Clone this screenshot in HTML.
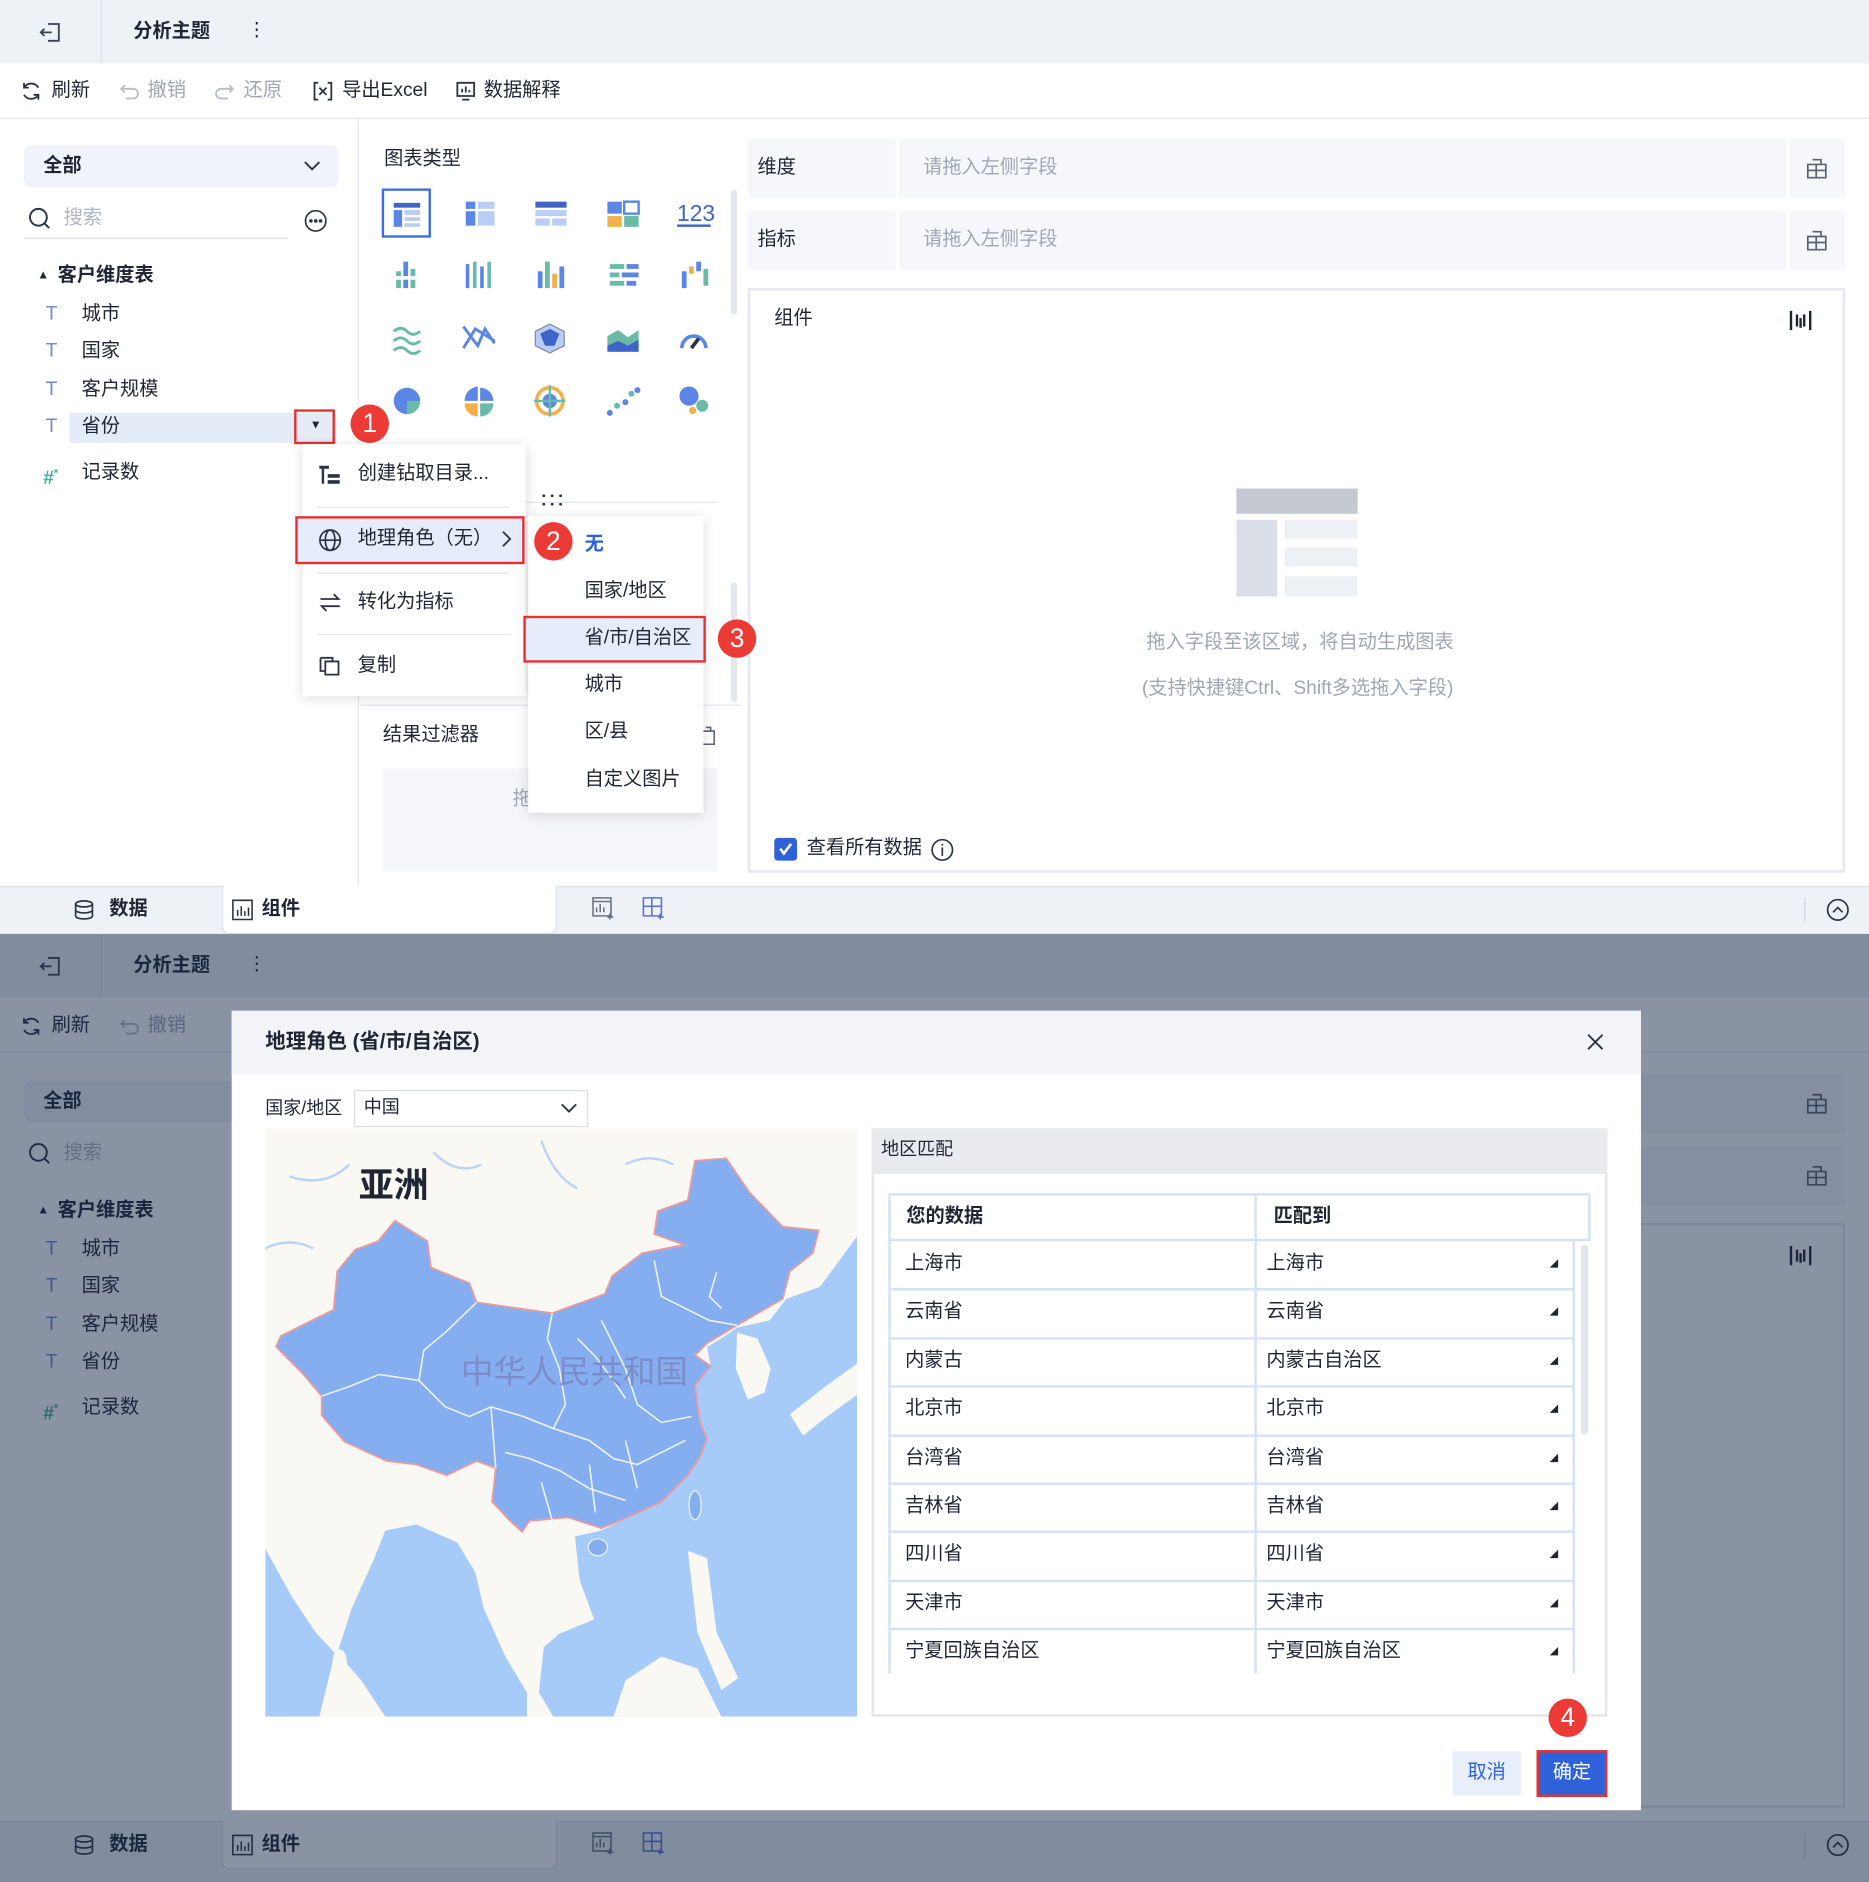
<!DOCTYPE html>
<html><head><meta charset="utf-8">
<style>
*{box-sizing:border-box;margin:0;padding:0}
html,body{width:1869px;height:1882px;overflow:hidden;background:#fff}
body{font-family:"Liberation Sans","Noto Sans CJK SC",sans-serif;color:#1f2533}
#w{position:absolute;left:0;top:0;width:1557px;height:1568px;transform:scale(1.2004);transform-origin:0 0;overflow:hidden}
.a{position:absolute}
.t{position:absolute;font-size:16px;line-height:24px;white-space:nowrap}
.b{font-weight:bold}
.g{color:#a0a6b2}
.red{position:absolute;border:2px solid #e8302f}
.num{position:absolute;width:32px;height:32px;border-radius:50%;background:#ec3b36;color:#fff;font-size:22px;line-height:32px;text-align:center}
.ov{position:absolute;left:0;top:778px;width:1557px;height:790px;background:rgba(21,39,71,.5)}
</style></head><body><div id="w">

<!-- ====== TOP HALF ====== -->
<div class="a" style="left:0;top:0;width:1557px;height:53px;background:#eef1f6"></div>
<div class="a" style="left:84px;top:0;width:1px;height:53px;background:#dde1e8"></div>
<svg class="a" style="left:32px;top:17px" width="20" height="20" viewBox="0 0 20 20" fill="none" stroke="#3a4252" stroke-width="1.5"><path d="M8 3h9v14H8M11 10H2M5 7l-3 3 3 3"/></svg>
<div class="t b" style="left:111px;top:15px">分析主题</div>
<div class="t" style="left:206px;top:14px">⋮</div>

<div class="a" style="left:0;top:53px;width:1557px;height:46px;background:#fff;border-bottom:1px solid #e3e6ec"></div>
<svg class="a" style="left:17px;top:67px" width="18" height="18" viewBox="0 0 18 18" fill="none" stroke="#2b3242" stroke-width="1.5"><path d="M15 6A7 7 0 0 0 3 6M3 12a7 7 0 0 0 12 0M3 2v4h4M15 16v-4h-4"/></svg>
<div class="t" style="left:43px;top:64px">刷新</div>
<svg class="a" style="left:99px;top:68px" width="18" height="16" viewBox="0 0 18 16" fill="none" stroke="#b7bcc6" stroke-width="1.5"><path d="M5 3L2 6l3 3M2 6h10a4 4 0 0 1 0 8H6"/></svg>
<div class="t g" style="left:123px;top:64px">撤销</div>
<svg class="a" style="left:178px;top:68px" width="18" height="16" viewBox="0 0 18 16" fill="none" stroke="#b7bcc6" stroke-width="1.5"><path d="M13 3l3 3-3 3M16 6H6a4 4 0 0 0 0 8h6"/></svg>
<div class="t g" style="left:203px;top:64px">还原</div>
<svg class="a" style="left:260px;top:67px" width="18" height="18" viewBox="0 0 18 18" fill="none" stroke="#2b3242" stroke-width="1.5"><path d="M5 2H2v14h3M13 2h3v14h-3M6 6l6 6M12 6l-6 6"/></svg>
<div class="t" style="left:285px;top:64px">导出Excel</div>
<svg class="a" style="left:379px;top:67px" width="18" height="18" viewBox="0 0 18 18" fill="none" stroke="#2b3242" stroke-width="1.5"><path d="M2 2h14v11H2zM6 16h6M6 10V7M9 10V5M12 10V8"/></svg>
<div class="t" style="left:403px;top:64px">数据解释</div>

<!-- left panel -->
<div class="a" style="left:298px;top:99px;width:1px;height:640px;background:#e3e6ec"></div>
<div class="a" style="left:20px;top:121px;width:262px;height:35px;background:#f0f3fa;border-radius:6px"></div>
<div class="t b" style="left:36px;top:127px">全部</div>
<svg class="a" style="left:252px;top:132px" width="16" height="12" viewBox="0 0 16 12" fill="none" stroke="#2b3242" stroke-width="1.6"><path d="M2 3l6 6 6-6"/></svg>
<svg class="a" style="left:23px;top:172px" width="20" height="20" viewBox="0 0 20 20" fill="none" stroke="#2b3242" stroke-width="1.6"><circle cx="9" cy="9" r="7"/><path d="M14 14l4 4"/></svg>
<div class="t" style="left:53px;top:170px;color:#b0b5bf">搜索</div>
<div class="a" style="left:20px;top:198px;width:220px;height:1px;background:#d8dce3"></div>
<svg class="a" style="left:253px;top:174px" width="20" height="20" viewBox="0 0 20 20" fill="none" stroke="#2b3242" stroke-width="1.4"><circle cx="10" cy="10" r="8.5"/><circle cx="6" cy="10" r=".8" fill="#2b3242"/><circle cx="10" cy="10" r=".8" fill="#2b3242"/><circle cx="14" cy="10" r=".8" fill="#2b3242"/></svg>
<div class="t" style="left:31px;top:218px;font-size:10px">▲</div>
<div class="t b" style="left:48px;top:218px">客户维度表</div>
<div class="t" style="left:38px;top:250px;color:#6d8bd0">T</div><div class="t" style="left:68px;top:250px">城市</div>
<div class="t" style="left:38px;top:281px;color:#6d8bd0">T</div><div class="t" style="left:68px;top:281px">国家</div>
<div class="t" style="left:38px;top:313px;color:#6d8bd0">T</div><div class="t" style="left:68px;top:313px">客户规模</div>
<div class="a" style="left:58px;top:344px;width:222px;height:25px;background:#e6ebf8"></div>
<div class="t" style="left:38px;top:344px;color:#6d8bd0">T</div><div class="t" style="left:68px;top:344px">省份</div>
<div class="red" style="left:245px;top:341px;width:34px;height:29px"></div>
<div class="t" style="left:258px;top:343px;font-size:10px">▼</div>
<div class="num" style="left:292px;top:337px">1</div>
<div class="t b" style="left:36px;top:382px;color:#3fb596">#<sup style="font-size:9px">*</sup></div>
<div class="t" style="left:68px;top:382px">记录数</div>

<!-- middle panel -->
<div class="t" style="left:320px;top:121px">图表类型</div>
<div class="a" style="left:318px;top:157px;width:41px;height:41px;border:2px solid #3d6ee8"></div>
<svg class="a" style="left:318px;top:160px" width="290" height="195" viewBox="0 0 290 195">
 <g fill="#5c86e6">
  <rect x="10" y="9" width="22" height="4" fill="#3f64c8"/><rect x="10" y="15" width="7" height="14"/><rect x="19" y="15" width="13" height="4" fill="#b9cdf6"/><rect x="19" y="21" width="13" height="3" fill="#b9cdf6"/><rect x="19" y="26" width="13" height="3" fill="#b9cdf6"/>
  <rect x="70" y="8" width="8" height="6"/><rect x="80" y="8" width="14" height="6" fill="#b9cdf6"/><rect x="70" y="16" width="8" height="12"/><rect x="80" y="16" width="14" height="12" fill="#b9cdf6"/>
  <rect x="128" y="8" width="26" height="5" fill="#3f64c8"/><rect x="128" y="15" width="26" height="5" fill="#b9cdf6"/><rect x="128" y="22" width="12" height="6" fill="#b9cdf6"/><rect x="142" y="22" width="12" height="6" fill="#b9cdf6"/>
  <rect x="188" y="8" width="12" height="10"/><rect x="202" y="8" width="12" height="10" fill="none" stroke="#5c86e6" stroke-width="2"/><rect x="188" y="20" width="12" height="9" fill="#f2b04d"/><rect x="202" y="20" width="12" height="9" fill="#69bba8"/>
 </g>
 <text x="246" y="24" font-size="19" fill="#3f64c8" font-family="Liberation Sans">123</text>
 <rect x="246" y="27" width="28" height="2" fill="#3f64c8"/>
 <g fill="#5c86e6">
  <rect x="18" y="58" width="4" height="22"/><rect x="12" y="66" width="4" height="14" fill="#69bba8"/><rect x="24" y="64" width="4" height="16" fill="#69bba8"/><rect x="10" y="70" width="22" height="3" fill="#fff"/>
  <rect x="70" y="60" width="3" height="20"/><rect x="76" y="58" width="3" height="22" fill="#69bba8"/><rect x="82" y="62" width="3" height="18"/><rect x="88" y="58" width="3" height="22" fill="#69bba8"/>
  <rect x="130" y="66" width="4" height="14"/><rect x="136" y="58" width="4" height="22" fill="#69bba8"/><rect x="142" y="68" width="4" height="12" fill="#f2b04d"/><rect x="148" y="62" width="4" height="18"/>
  <rect x="190" y="60" width="12" height="4" fill="#69bba8"/><rect x="204" y="60" width="10" height="4"/><rect x="190" y="67" width="8" height="4" fill="#69bba8"/><rect x="200" y="67" width="14" height="4"/><rect x="190" y="74" width="12" height="4" fill="#69bba8"/><rect x="204" y="74" width="8" height="4"/>
  <rect x="250" y="66" width="4" height="14"/><rect x="256" y="62" width="4" height="6" fill="#f2b04d"/><rect x="262" y="58" width="4" height="8"/><rect x="268" y="64" width="4" height="14" fill="#69bba8"/>
 </g>
 <g fill="none" stroke-width="2.4">
  <path d="M10 116q6-5 11 0t11 0M10 124q6-5 11 0t11 0M10 132q6-5 11 0t11 0" stroke="#69bba8"/>
  <path d="M68 112l12 16 6-14 8 12M68 130l10-16 16 10" stroke="#5c86e6"/>
 </g>
 <path d="M140 110l12 6v12l-12 6-12-6v-12z" fill="#b9cdf6" stroke="#7a8aa8"/><path d="M132 118l8-4 8 4-4 10h-8z" fill="#3f64c8"/>
 <path d="M188 120l9-5 8 6 9-6v18h-26z" fill="#69bba8"/><path d="M188 128l9-4 8 4 9-5v10h-26z" fill="#3f64c8"/>
 <path d="M250 130a10 10 0 1 1 20 0" fill="none" stroke="#5c86e6" stroke-width="3"/><path d="M258 130l6-8" stroke="#2b3242" stroke-width="3"/>
 <circle cx="21" cy="174" r="11" fill="#5c86e6"/><path d="M21 174h11a11 11 0 0 1-11 11z" fill="#69bba8"/>
 <path d="M80 174v-12a12 12 0 0 0-11 12z" fill="#5c86e6"/><path d="M82 176h11a11 11 0 0 1-11 11z" fill="#69bba8"/><path d="M80 176v11a11 11 0 0 1-11-11z" fill="#f2b04d"/><path d="M82 174v-11a11 11 0 0 1 11 11z" fill="#5c86e6"/>
 <circle cx="140" cy="174" r="11" fill="none" stroke="#f2b04d" stroke-width="3"/><circle cx="140" cy="174" r="6" fill="#5c86e6"/><path d="M127 174h26M140 161v26" stroke="#69bba8" stroke-width="2"/>
 <g fill="#5c86e6"><circle cx="190" cy="184" r="2.5"/><circle cx="196" cy="178" r="2.5" fill="#69bba8"/><circle cx="203" cy="175" r="2.5"/><circle cx="208" cy="168" r="2.5" fill="#69bba8"/><circle cx="213" cy="165" r="2.5"/></g>
 <circle cx="256" cy="170" r="8" fill="#5c86e6"/><circle cx="267" cy="178" r="5" fill="#69bba8"/><circle cx="259" cy="182" r="3" fill="#f2b04d"/>
</svg>
<div class="a" style="left:609px;top:158px;width:5px;height:104px;background:#e4e7ec;border-radius:3px"></div>
<svg class="a" style="left:450px;top:410px" width="20" height="12" viewBox="0 0 20 12" fill="#2b3242"><circle cx="3" cy="3" r="1.2"/><circle cx="10" cy="3" r="1.2"/><circle cx="17" cy="3" r="1.2"/><circle cx="3" cy="10" r="1.2"/><circle cx="10" cy="10" r="1.2"/><circle cx="17" cy="10" r="1.2"/></svg>
<div class="a" style="left:438px;top:418px;width:160px;height:1px;background:#e3e6ec"></div>
<div class="a" style="left:300px;top:587px;width:318px;height:1px;background:#e3e6ec"></div>
<div class="a" style="left:609px;top:485px;width:5px;height:100px;background:#e4e7ec;border-radius:3px"></div>
<div class="t" style="left:319px;top:601px">结果过滤器</div>
<div class="a" style="left:319px;top:640px;width:279px;height:86px;background:#f5f6f9"></div>
<div class="t g" style="left:427px;top:654px">拖</div>
<svg class="a" style="left:582px;top:604px" width="16" height="18" viewBox="0 0 16 18" fill="none" stroke="#5a6272" stroke-width="1.3"><path d="M3 5h10v11H3zM6 2h4v3"/></svg>

<!-- right panel -->
<div class="a" style="left:623px;top:116px;width:914px;height:49px;background:#f6f7fa"></div>
<div class="a" style="left:746px;top:116px;width:3px;height:49px;background:#fff"></div>
<div class="a" style="left:1488px;top:116px;width:3px;height:49px;background:#fff"></div>
<div class="t" style="left:631px;top:128px">维度</div>
<div class="t g" style="left:769px;top:128px">请拖入左侧字段</div>
<div class="a" style="left:623px;top:176px;width:914px;height:49px;background:#f6f7fa"></div>
<div class="a" style="left:746px;top:176px;width:3px;height:49px;background:#fff"></div>
<div class="a" style="left:1488px;top:176px;width:3px;height:49px;background:#fff"></div>
<div class="t" style="left:631px;top:188px">指标</div>
<div class="t g" style="left:769px;top:188px">请拖入左侧字段</div>
<svg class="a" style="left:1505px;top:131px" width="17" height="18" viewBox="0 0 17 18" fill="none" stroke="#5a6272" stroke-width="1.4"><path d="M1 6h15v11H1zM5 2h7v4M1 11h15M8 6v11"/></svg>
<svg class="a" style="left:1505px;top:191px" width="17" height="18" viewBox="0 0 17 18" fill="none" stroke="#5a6272" stroke-width="1.4"><path d="M1 6h15v11H1zM5 2h7v4M1 11h15M8 6v11"/></svg>
<div class="a" style="left:623px;top:240px;width:914px;height:487px;border:2px solid #e6e8ee"></div>
<div class="t" style="left:645px;top:254px">组件</div>
<svg class="a" style="left:1490px;top:257px" width="20" height="20" viewBox="0 0 20 20" stroke="#1f2533" stroke-width="2"><path d="M2 2v16M18 2v16M7 5v10M13 5v10M10 8v8"/></svg>
<div class="a" style="left:1030px;top:407px;width:101px;height:21px;background:#c3c8d1"></div>
<div class="a" style="left:1030px;top:433px;width:34px;height:64px;background:#dadee6"></div>
<div class="a" style="left:1070px;top:433px;width:61px;height:16px;background:#edf0f4"></div>
<div class="a" style="left:1070px;top:456px;width:61px;height:16px;background:#edf0f4"></div>
<div class="a" style="left:1070px;top:480px;width:61px;height:17px;background:#edf0f4"></div>
<div class="t g" style="left:955px;top:524px;width:252px;text-align:center">拖入字段至该区域，将自动生成图表</div>
<div class="t g" style="left:940px;top:562px;width:282px;text-align:center">(支持快捷键Ctrl、Shift多选拖入字段)</div>
<div class="a" style="left:645px;top:698px;width:19px;height:19px;background:#2f62d9;border-radius:3px"></div>
<svg class="a" style="left:647px;top:700px" width="15" height="15" viewBox="0 0 15 15" fill="none" stroke="#fff" stroke-width="2.2"><path d="M3 7l3 4 6-8"/></svg>
<div class="t" style="left:672px;top:695px">查看所有数据</div>
<svg class="a" style="left:775px;top:698px" width="20" height="20" viewBox="0 0 20 20" fill="none" stroke="#2b3242" stroke-width="1.4"><circle cx="10" cy="10" r="8.5"/><path d="M10 8v7M10 5v1.5"/></svg>

<!-- context menu -->
<div class="a" style="left:252px;top:370px;width:186px;height:210px;background:#fff;box-shadow:0 2px 10px rgba(0,0,0,.15)"></div>
<svg class="a" style="left:265px;top:387px" width="20" height="18" viewBox="0 0 20 18" fill="#2b3242"><rect x="1" y="1" width="8" height="2.5"/><rect x="3" y="3" width="2" height="13"/><rect x="8" y="8" width="10" height="3"/><rect x="8" y="13" width="10" height="3"/></svg>
<div class="t" style="left:298px;top:383px">创建钻取目录...</div>
<div class="a" style="left:264px;top:422px;width:160px;height:1px;background:#e3e6ec"></div>
<div class="a" style="left:248px;top:432px;width:186px;height:36px;background:#e6ecfa"></div>
<div class="red" style="left:246px;top:430px;width:191px;height:40px"></div>
<svg class="a" style="left:265px;top:440px" width="20" height="20" viewBox="0 0 20 20" fill="none" stroke="#2b3242" stroke-width="1.4"><circle cx="10" cy="10" r="8.5"/><ellipse cx="10" cy="10" rx="4" ry="8.5"/><path d="M1.5 10h17"/></svg>
<div class="t" style="left:298px;top:437px">地理角色（无）</div>
<svg class="a" style="left:416px;top:441px" width="12" height="16" viewBox="0 0 12 16" fill="none" stroke="#2b3242" stroke-width="1.5"><path d="M3 2l6 6-6 6"/></svg>
<div class="a" style="left:264px;top:477px;width:160px;height:1px;background:#e3e6ec"></div>
<svg class="a" style="left:265px;top:493px" width="20" height="18" viewBox="0 0 20 18" fill="none" stroke="#2b3242" stroke-width="1.5"><path d="M2 6h15l-4-4M18 12H3l4 4"/></svg>
<div class="t" style="left:298px;top:490px">转化为指标</div>
<div class="a" style="left:264px;top:528px;width:160px;height:1px;background:#e3e6ec"></div>
<svg class="a" style="left:265px;top:546px" width="20" height="18" viewBox="0 0 20 18" fill="none" stroke="#2b3242" stroke-width="1.5"><path d="M6 5h11v11H6zM2 2h10v3M2 2v11h4"/></svg>
<div class="t" style="left:298px;top:543px">复制</div>

<div class="a" style="left:440px;top:430px;width:146px;height:247px;background:#fff;box-shadow:0 2px 10px rgba(0,0,0,.15)"></div>
<div class="t b" style="left:487px;top:442px;color:#2f62d9">无</div>
<div class="t" style="left:487px;top:481px">国家/地区</div>
<div class="a" style="left:438px;top:515px;width:148px;height:35px;background:#e6ecfa"></div>
<div class="red" style="left:436px;top:513px;width:152px;height:39px"></div>
<div class="t" style="left:487px;top:520px">省/市/自治区</div>
<div class="t" style="left:487px;top:559px">城市</div>
<div class="t" style="left:487px;top:598px">区/县</div>
<div class="t" style="left:487px;top:638px">自定义图片</div>
<div class="num" style="left:445px;top:435px">2</div>
<div class="num" style="left:598px;top:516px">3</div>

<!-- bottom tab bar -->
<div class="a" style="left:0;top:738px;width:1557px;height:40px;background:#eef1f6;border-top:1px solid #dde1e8"></div>
<div class="a" style="left:185px;top:738px;width:279px;height:40px;background:#fff;border:1px solid #dde1e8;border-top:none;border-radius:0 0 6px 6px"></div>
<svg class="a" style="left:61px;top:749px" width="18" height="18" viewBox="0 0 18 18" fill="none" stroke="#2b3242" stroke-width="1.4"><ellipse cx="9" cy="4" rx="7" ry="2.5"/><path d="M2 4v10c0 1.5 3 2.5 7 2.5s7-1 7-2.5V4M2 9c0 1.5 3 2.5 7 2.5s7-1 7-2.5"/></svg>
<div class="t b" style="left:91px;top:746px">数据</div>
<svg class="a" style="left:193px;top:749px" width="18" height="18" viewBox="0 0 18 18" fill="none" stroke="#2b3242" stroke-width="1.3"><path d="M1 1h16v16H1zM5 14V9M8 14V6M11 14V10M14 14V7"/></svg>
<div class="t b" style="left:218px;top:746px">组件</div>
<svg class="a" style="left:493px;top:747px" width="20" height="20" viewBox="0 0 20 20" fill="none" stroke="#6a7282" stroke-width="1.3"><path d="M1 1h15v15H1zM4 13V9M7 13V6M10 13V9M1 4h15M15 14v5M13 17h5"/></svg>
<svg class="a" style="left:535px;top:747px" width="20" height="20" viewBox="0 0 20 20" fill="none" stroke="#5c73d0" stroke-width="1.3"><path d="M1 1h15v15H1zM1 8h15M8 1v15M15 14v5M13 17h5"/></svg>
<div class="a" style="left:1503px;top:748px;width:1px;height:20px;background:#d0d4dc"></div>
<svg class="a" style="left:1521px;top:748px" width="20" height="20" viewBox="0 0 20 20" fill="none" stroke="#2b3242" stroke-width="1.4"><circle cx="10" cy="10" r="8.5"/><path d="M6 12l4-4 4 4"/></svg>

<!-- ====== BOTTOM HALF (dimmed background) ====== -->
<div class="a" style="left:0;top:778px;width:1557px;height:53px;background:#eef1f6"></div>
<div class="a" style="left:84px;top:778px;width:1px;height:53px;background:#dde1e8"></div>
<svg class="a" style="left:32px;top:795px" width="20" height="20" viewBox="0 0 20 20" fill="none" stroke="#3a4252" stroke-width="1.5"><path d="M8 3h9v14H8M11 10H2M5 7l-3 3 3 3"/></svg>
<div class="t b" style="left:111px;top:793px">分析主题</div>
<div class="t" style="left:206px;top:792px">⋮</div>
<div class="a" style="left:0;top:831px;width:1557px;height:46px;background:#fff;border-bottom:1px solid #e3e6ec"></div>
<div class="t" style="left:43px;top:843px">刷新</div>
<svg class="a" style="left:17px;top:846px" width="18" height="18" viewBox="0 0 18 18" fill="none" stroke="#2b3242" stroke-width="1.5"><path d="M15 6A7 7 0 0 0 3 6M3 12a7 7 0 0 0 12 0M3 2v4h4M15 16v-4h-4"/></svg>
<svg class="a" style="left:99px;top:847px" width="18" height="16" viewBox="0 0 18 16" fill="none" stroke="#b7bcc6" stroke-width="1.5"><path d="M5 3L2 6l3 3M2 6h10a4 4 0 0 1 0 8H6"/></svg>
<div class="t g" style="left:123px;top:843px">撤销</div>
<div class="a" style="left:0;top:877px;width:1557px;height:640px;background:#fff"></div>
<div class="a" style="left:20px;top:900px;width:262px;height:35px;background:#f0f3fa;border-radius:6px"></div>
<div class="t b" style="left:36px;top:906px">全部</div>
<svg class="a" style="left:23px;top:951px" width="20" height="20" viewBox="0 0 20 20" fill="none" stroke="#2b3242" stroke-width="1.6"><circle cx="9" cy="9" r="7"/><path d="M14 14l4 4"/></svg>
<div class="t" style="left:53px;top:949px;color:#b0b5bf">搜索</div>
<div class="t" style="left:31px;top:997px;font-size:10px">▲</div>
<div class="t b" style="left:48px;top:997px">客户维度表</div>
<div class="t" style="left:38px;top:1029px;color:#6d8bd0">T</div><div class="t" style="left:68px;top:1029px">城市</div>
<div class="t" style="left:38px;top:1060px;color:#6d8bd0">T</div><div class="t" style="left:68px;top:1060px">国家</div>
<div class="t" style="left:38px;top:1092px;color:#6d8bd0">T</div><div class="t" style="left:68px;top:1092px">客户规模</div>
<div class="t" style="left:38px;top:1123px;color:#6d8bd0">T</div><div class="t" style="left:68px;top:1123px">省份</div>
<div class="t b" style="left:36px;top:1161px;color:#3fb596">#<sup style="font-size:9px">*</sup></div>
<div class="t" style="left:68px;top:1161px">记录数</div>
<div class="a" style="left:623px;top:895px;width:914px;height:49px;background:#f6f7fa"></div>
<div class="a" style="left:623px;top:955px;width:914px;height:49px;background:#f6f7fa"></div>
<svg class="a" style="left:1505px;top:910px" width="17" height="18" viewBox="0 0 17 18" fill="none" stroke="#5a6272" stroke-width="1.4"><path d="M1 6h15v11H1zM5 2h7v4M1 11h15M8 6v11"/></svg>
<svg class="a" style="left:1505px;top:970px" width="17" height="18" viewBox="0 0 17 18" fill="none" stroke="#5a6272" stroke-width="1.4"><path d="M1 6h15v11H1zM5 2h7v4M1 11h15M8 6v11"/></svg>
<div class="a" style="left:623px;top:1019px;width:914px;height:487px;border:2px solid #e6e8ee"></div>
<svg class="a" style="left:1490px;top:1036px" width="20" height="20" viewBox="0 0 20 20" stroke="#1f2533" stroke-width="2"><path d="M2 2v16M18 2v16M7 5v10M13 5v10M10 8v8"/></svg>
<div class="a" style="left:0;top:1517px;width:1557px;height:51px;background:#eef1f6;border-top:1px solid #dde1e8"></div>
<div class="a" style="left:185px;top:1517px;width:279px;height:40px;background:#fff;border:1px solid #dde1e8;border-top:none;border-radius:0 0 6px 6px"></div>
<svg class="a" style="left:61px;top:1528px" width="18" height="18" viewBox="0 0 18 18" fill="none" stroke="#2b3242" stroke-width="1.4"><ellipse cx="9" cy="4" rx="7" ry="2.5"/><path d="M2 4v10c0 1.5 3 2.5 7 2.5s7-1 7-2.5V4M2 9c0 1.5 3 2.5 7 2.5s7-1 7-2.5"/></svg>
<div class="t b" style="left:91px;top:1525px">数据</div>
<svg class="a" style="left:193px;top:1528px" width="18" height="18" viewBox="0 0 18 18" fill="none" stroke="#2b3242" stroke-width="1.3"><path d="M1 1h16v16H1zM5 14V9M8 14V6M11 14V10M14 14V7"/></svg>
<div class="t b" style="left:218px;top:1525px">组件</div>
<svg class="a" style="left:493px;top:1526px" width="20" height="20" viewBox="0 0 20 20" fill="none" stroke="#6a7282" stroke-width="1.3"><path d="M1 1h15v15H1zM4 13V9M7 13V6M10 13V9M1 4h15M15 14v5M13 17h5"/></svg>
<svg class="a" style="left:535px;top:1526px" width="20" height="20" viewBox="0 0 20 20" fill="none" stroke="#5c73d0" stroke-width="1.3"><path d="M1 1h15v15H1zM1 8h15M8 1v15M15 14v5M13 17h5"/></svg>
<div class="a" style="left:1503px;top:1527px;width:1px;height:20px;background:#d0d4dc"></div>
<svg class="a" style="left:1521px;top:1527px" width="20" height="20" viewBox="0 0 20 20" fill="none" stroke="#2b3242" stroke-width="1.4"><circle cx="10" cy="10" r="8.5"/><path d="M6 12l4-4 4 4"/></svg>
<div class="ov"></div>

<!-- ====== MODAL ====== -->
<div class="a" style="left:193px;top:842px;width:1174px;height:666px;background:#fff"></div>
<div class="a" style="left:193px;top:842px;width:1174px;height:53px;background:#f3f4f7"></div>
<div class="t b" style="left:221px;top:856px;font-size:17px">地理角色 (省/市/自治区)</div>
<svg class="a" style="left:1321px;top:860px" width="16" height="16" viewBox="0 0 16 16" stroke="#2b3242" stroke-width="1.6"><path d="M2 2l12 12M14 2L2 14"/></svg>
<div class="t" style="left:221px;top:912px;font-size:15px">国家/地区</div>
<div class="a" style="left:295px;top:908px;width:195px;height:31px;border:1px solid #d8dce3"></div>
<div class="t" style="left:303px;top:911px;font-size:15px">中国</div>
<svg class="a" style="left:466px;top:917px" width="16" height="12" viewBox="0 0 16 12" fill="none" stroke="#2b3242" stroke-width="1.6"><path d="M2 3l6 6 6-6"/></svg>

<!-- map -->
<svg class="a" style="left:221px;top:940px" width="493" height="490" viewBox="0 0 493 490">
 <rect width="493" height="490" fill="#faf8f2"/>
 <path d="M493 90L462 132L434 142L420 160L393 166L380 175L368 182L371 198L358 214L362 245L368 258L352 289L330 311L302 324L280 335L258 340L262 377L274 409L245 421L232 432L228 470L240 490L493 490Z" fill="#a6cbf8"/>
 <path d="M393 170L410 175L421 200L416 220L402 226L392 200Z" fill="#faf8f2"/>
 <path d="M437 238L468 214L493 196L493 222L468 240L448 256Z" fill="#faf8f2"/>
 <path d="M352 352L368 358L376 420L394 458L380 468L360 420Z" fill="#faf8f2"/>
 <path d="M300 460L330 440L360 450L380 490L290 490Z" fill="#faf8f2"/>
 <path d="M100 335L126 330L160 345L175 370L182 400L200 440L218 470L218 490L100 490L80 460L60 437L72 400L90 360Z" fill="#a6cbf8"/>
 <path d="M0 350L22 390L42 420L58 437L45 490L0 490Z" fill="#a6cbf8"/>
 <ellipse cx="62" cy="445" rx="6" ry="11" fill="#faf8f2"/>
 <path d="M0 100q20-10 40 0M20 40q30 10 50-10M140 20q20 20 40 10M230 10q10 30 30 40M300 30q20-10 40 0M60 215q40 10 70 40" fill="none" stroke="#b8d4f8" stroke-width="2"/>
 <path d="M108 77L135 94L138 116L170 129L176 145L239 154L283 138L289 123L314 104L349 97L324 88L327 69L352 60L358 27L384 25L403 53L431 82L461 85L456 104L437 119L431 142L393 164L368 179L358 189L371 198L358 214L362 245L368 258L362 274L352 289L330 311L302 324L280 333L252 324L220 327L214 336L204 327L189 311L192 283L176 277L151 289L126 280L101 277L66 261L47 239L47 223L31 204L9 182L13 173L31 164L57 151L60 119L75 101L94 94Z" fill="#84aef0" stroke="#ea9aa0" stroke-width="1.5"/>
 <g fill="none" stroke="#eef3fd" stroke-width="1.3">
  <path d="M176 145L150 170L132 185L128 210L150 232L170 240L188 232L192 283"/>
  <path d="M47 223L70 215L95 205L128 210"/>
  <path d="M188 232L215 240L240 250L270 260L290 275L310 280L330 270L350 260"/>
  <path d="M239 154L235 175L245 200L250 230L240 250"/>
  <path d="M280 160L290 180L300 200L310 230L330 245L355 240"/>
  <path d="M324 110L330 140L350 150L370 160L393 164"/>
  <path d="M376 120L370 140L380 150"/>
  <path d="M260 175L275 190L290 210L300 225M200 270L220 275L245 285L270 300L300 310"/>
  <path d="M230 295L240 330M270 280L275 320M300 260L310 300"/>
 </g>
 <ellipse cx="277" cy="349" rx="8" ry="7" fill="#84aef0" stroke="#eef3fd"/>
 <ellipse cx="358" cy="314" rx="5" ry="12" fill="#84aef0" stroke="#eef3fd"/>
 <text x="78" y="57" font-size="29" font-weight="bold" fill="#1f2533" font-family="Noto Sans CJK SC,sans-serif">亚洲</text>
 <text x="163" y="212" font-size="27" fill="#7b86c4" font-family="Noto Sans CJK SC,sans-serif" opacity=".85">中华人民共和国</text>
</svg>

<!-- match table -->
<div class="a" style="left:726px;top:940px;width:613px;height:490px;border:2px solid #e3e5ea"></div>
<div class="a" style="left:726px;top:940px;width:613px;height:38px;background:#e9eaee"></div>
<div class="t" style="left:734px;top:946px;font-size:15px">地区匹配</div>
<div class="a" style="left:740px;top:994px;width:585px;height:40px;border:2px solid #d6e1f5"></div>
<div class="a" style="left:1045px;top:994px;width:2px;height:400px;background:#d6e1f5"></div>
<div class="t b" style="left:755px;top:1002px">您的数据</div>
<div class="t b" style="left:1061px;top:1002px">匹配到</div>
<div class="a" style="left:740px;top:1034px;width:2px;height:360px;background:#d6e1f5"></div>
<div class="a" style="left:1310px;top:1034px;width:2px;height:360px;background:#d6e1f5"></div>
<div class="a" style="left:1317px;top:1037px;width:6px;height:158px;background:#e3e6ec;border-radius:3px"></div>
<div class="t" style="left:754px;top:1041px">上海市</div><div class="t" style="left:1055px;top:1041px">上海市</div>
<div class="t" style="left:754px;top:1081px">云南省</div><div class="t" style="left:1055px;top:1081px">云南省</div>
<div class="t" style="left:754px;top:1122px">内蒙古</div><div class="t" style="left:1055px;top:1122px">内蒙古自治区</div>
<div class="t" style="left:754px;top:1162px">北京市</div><div class="t" style="left:1055px;top:1162px">北京市</div>
<div class="t" style="left:754px;top:1203px">台湾省</div><div class="t" style="left:1055px;top:1203px">台湾省</div>
<div class="t" style="left:754px;top:1243px">吉林省</div><div class="t" style="left:1055px;top:1243px">吉林省</div>
<div class="t" style="left:754px;top:1283px">四川省</div><div class="t" style="left:1055px;top:1283px">四川省</div>
<div class="t" style="left:754px;top:1324px">天津市</div><div class="t" style="left:1055px;top:1324px">天津市</div>
<div class="t" style="left:754px;top:1364px">宁夏回族自治区</div><div class="t" style="left:1055px;top:1364px">宁夏回族自治区</div>
<div class="a" style="left:740px;top:1073px;width:572px;height:2px;background:#d6e1f5"></div>
<div class="a" style="left:740px;top:1114px;width:572px;height:2px;background:#d6e1f5"></div>
<div class="a" style="left:740px;top:1154px;width:572px;height:2px;background:#d6e1f5"></div>
<div class="a" style="left:740px;top:1195px;width:572px;height:2px;background:#d6e1f5"></div>
<div class="a" style="left:740px;top:1235px;width:572px;height:2px;background:#d6e1f5"></div>
<div class="a" style="left:740px;top:1275px;width:572px;height:2px;background:#d6e1f5"></div>
<div class="a" style="left:740px;top:1316px;width:572px;height:2px;background:#d6e1f5"></div>
<div class="a" style="left:740px;top:1356px;width:572px;height:2px;background:#d6e1f5"></div>
<svg class="a" style="left:1291px;top:1049px" width="8" height="340" viewBox="0 0 8 340" fill="#1f2533">
 <path d="M7 0v7H0z"/><path d="M7 40v7H0z"/><path d="M7 81v7H0z"/><path d="M7 121v7H0z"/><path d="M7 162v7H0z"/><path d="M7 202v7H0z"/><path d="M7 242v7H0z"/><path d="M7 283v7H0z"/><path d="M7 323v7H0z"/>
</svg>

<div class="a" style="left:1210px;top:1459px;width:57px;height:37px;background:#e9eefb;border-radius:2px"></div>
<div class="t" style="left:1210px;top:1465px;width:57px;text-align:center;color:#2f62d9">取消</div>
<div class="a" style="left:1280px;top:1458px;width:59px;height:39px;background:#2f62d9;border:2px solid #e8302f"></div>
<div class="t" style="left:1280px;top:1465px;width:59px;text-align:center;color:#fff">确定</div>
<div class="num" style="left:1290px;top:1415px">4</div>

</div></body></html>
